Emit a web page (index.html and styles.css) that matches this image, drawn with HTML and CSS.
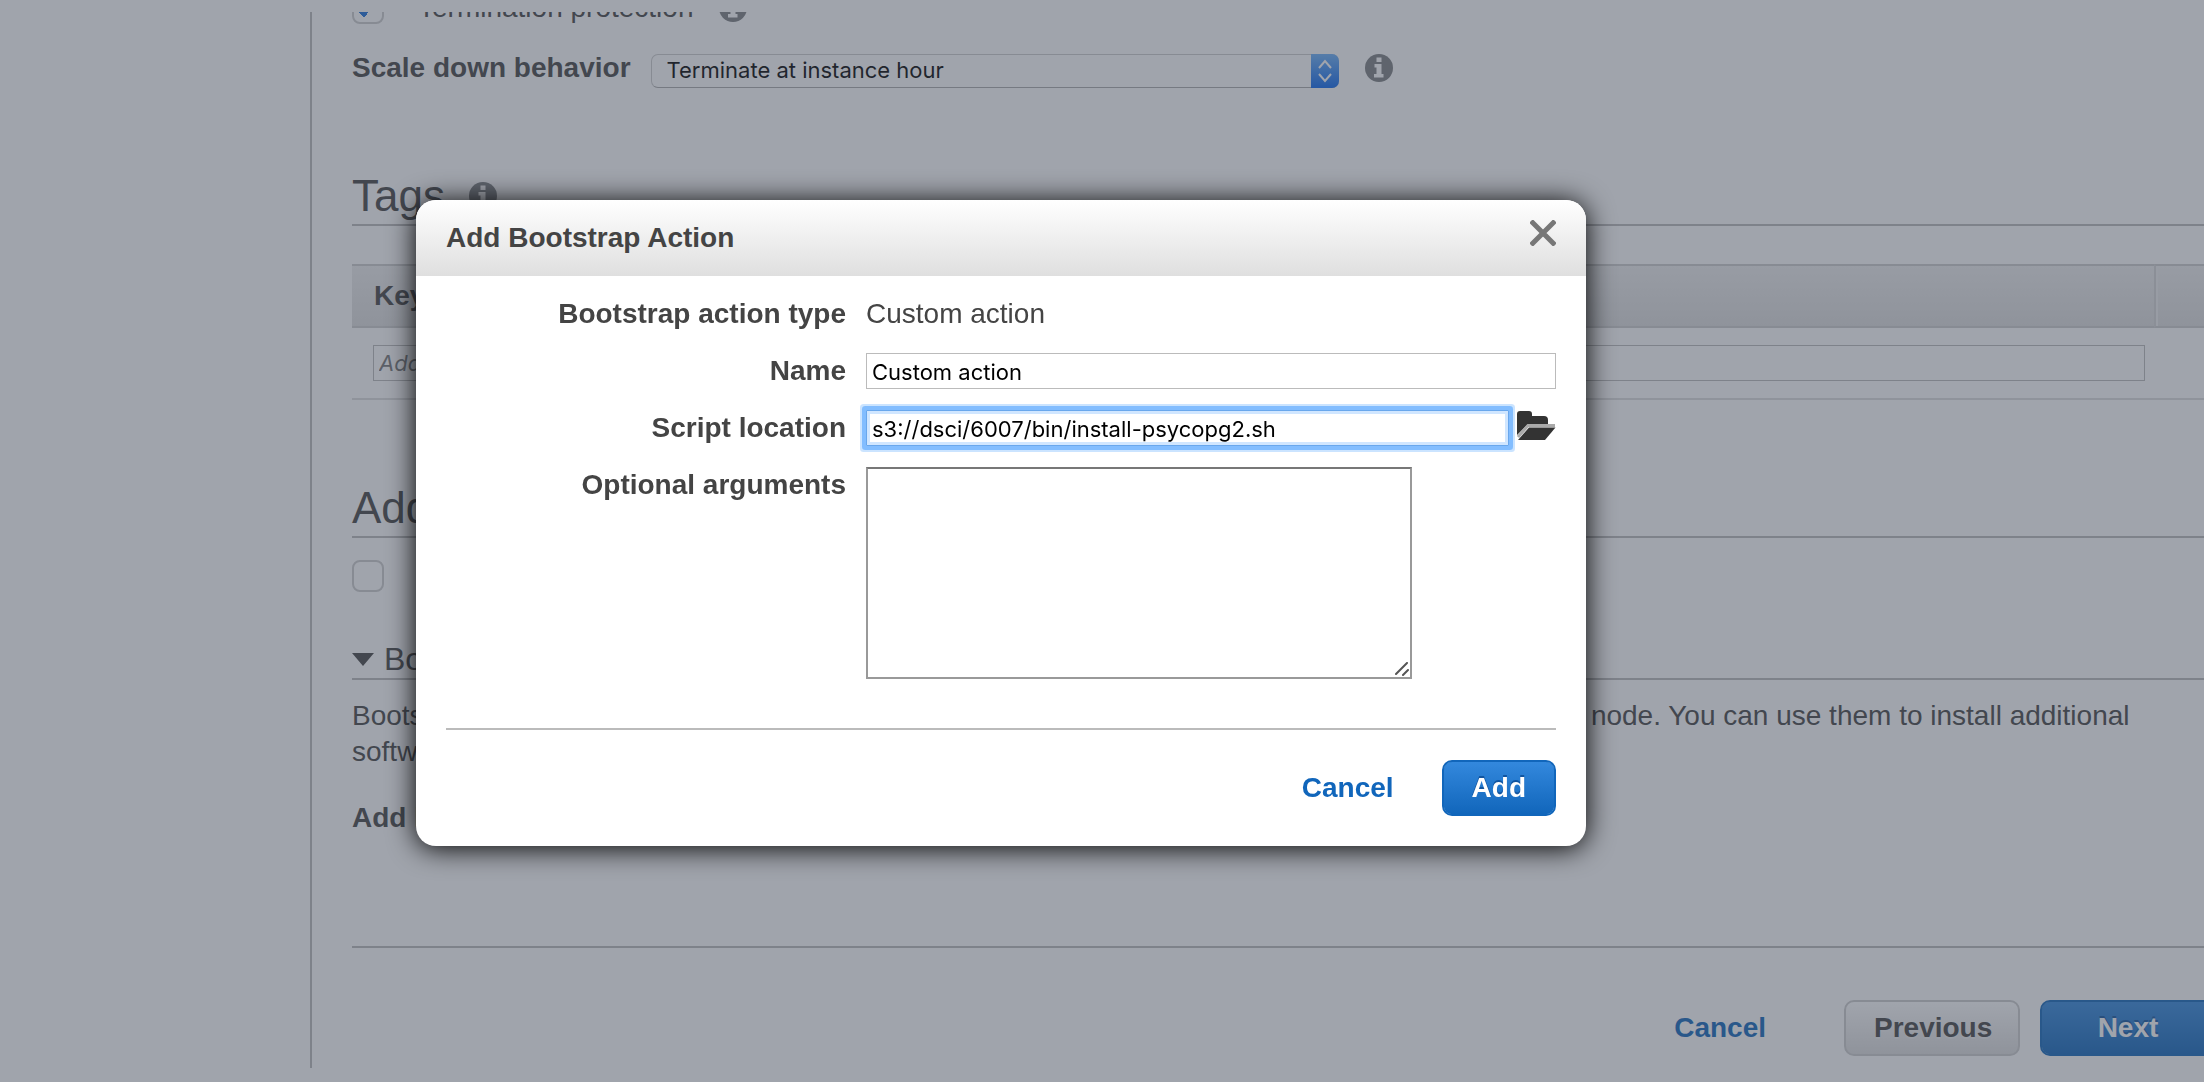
FILE: index.html
```html
<!DOCTYPE html>
<html lang="en">
<head>
<meta charset="utf-8">
<title>Create Cluster - Add Bootstrap Action</title>
<link rel="stylesheet" href="styles.css">
</head>
<body>
<svg class="sprite" aria-hidden="true">
  <symbol id="info" viewBox="0 0 28 28">
    <circle cx="14" cy="14" r="14" fill="#7c7e80"/>
    <path d="M11.500 3.500h5v4.500h-5zM9.500 10h7v10h2v3.500h-9.500V20h2.500v-6.500h-2z" fill="#fff"/>
  </symbol>
</svg>

<main class="page">
  <div class="option">
    <input class="check" type="checkbox" id="termination" checked>
    <label class="option-label" for="termination">Termination protection</label>
    <svg class="info"><use href="#info"/></svg>
  </div>

  <div class="scale">
    <label class="strong" for="scale-down">Scale down behavior</label>
    <div class="select-box">
      <select class="select" id="scale-down">
        <option>Terminate at instance hour</option>
      </select>
      <svg class="select-arrows" viewBox="0 0 28 34" aria-hidden="true">
        <path d="M8 14l6-7 6 7M8 20l6 7 6-7" fill="none" stroke="#fff" stroke-width="2"/>
      </svg>
    </div>
    <svg class="info"><use href="#info"/></svg>
  </div>

  <section>
    <h2 class="section-title">Tags <svg class="info"><use href="#info"/></svg></h2>
    <table class="tags">
      <thead>
        <tr><th>Key</th><th class="tags-end"></th></tr>
      </thead>
      <tbody>
        <tr><td><input class="tag-input" type="text" aria-label="Key" placeholder="Add a key to create a tag"></td><td></td></tr>
      </tbody>
    </table>
  </section>

  <section>
    <h2 class="section-title">Additional Options</h2>
    <div class="option option-spaced">
      <input class="check" type="checkbox" id="emrfs">
      <label class="option-label" for="emrfs">EMRFS consistent view</label>
    </div>
    <h3 class="sub-title">
      <svg class="caret" viewBox="0 0 22 13" aria-hidden="true"><path d="M0 0h22L11 13z" fill="#444"/></svg>
      Bootstrap Actions
    </h3>
    <p class="text">Bootstrap actions are scripts which are executed during setup before Hadoop starts on each cluster node. You can use them to install additional software and customize your applications.</p>
    <p class="add-line">Add bootstrap action</p>
  </section>

  <footer class="footer">
    <a class="link" href="#">Cancel</a>
    <button class="button button-wide" type="button">Previous</button>
    <button class="button button-wide button-primary" type="button">Next</button>
  </footer>
</main>

<div class="overlay"></div>

<form class="dialog" role="dialog" aria-labelledby="dialog-title">
  <header class="dialog-head">
    <h1 class="dialog-title" id="dialog-title">Add Bootstrap Action</h1>
    <button class="close" type="button" aria-label="Close">
      <svg width="26" height="26" viewBox="0 0 26 26"><path d="M1 1l24 24M25 1L1 25" stroke="#777" stroke-width="5"/></svg>
    </button>
  </header>
  <div class="dialog-body">
    <div class="fields">
      <span class="field-label">Bootstrap action type</span>
      <span class="field-value">Custom action</span>
      <label class="field-label" for="name">Name</label>
      <input class="input" type="text" id="name" value="Custom action">
      <label class="field-label" for="script">Script location</label>
      <div class="picker">
        <input class="input input-active" type="text" id="script" value="s3://dsci/6007/bin/install-psycopg2.sh">
        <button class="folder" type="button" aria-label="Browse">
          <svg width="40" height="30" viewBox="0 0 40 30">
            <path d="M1 25V4q0-3 3-3h9q3 0 3 3v2h12q4 0 4 4v5H13q-2 0-3 1z" fill="#333"/>
            <path d="M2 27L12 15.500h27" fill="none" stroke="#aaa" stroke-width="3"/>
            <path d="M13 17.500h26.500L29 30H2z" fill="#333"/>
          </svg>
        </button>
      </div>
      <label class="field-label" for="args">Optional arguments</label>
      <div class="area-box">
        <textarea class="area" id="args"></textarea>
        <svg class="grip" width="14" height="14" viewBox="0 0 14 14" aria-hidden="true"><path d="M1 12L12 1M8 13l5-5" stroke="#555" stroke-width="2" stroke-linecap="round"/></svg>
      </div>
    </div>
    <footer class="dialog-foot">
      <a class="link" href="#">Cancel</a>
      <button class="button button-primary" type="submit">Add</button>
    </footer>
  </div>
</form>
</body>
</html>
```

FILE: styles.css
```css
* {
  box-sizing: border-box;
}

body {
  margin: 0;
  overflow: hidden;
  background: #fff;
  color: #444;
  font: 28px/32px "Liberation Sans", Arial, sans-serif;
}

h1, h2, h3, p {
  margin: 0;
  font-weight: normal;
}

button, input, select, textarea {
  margin: 0;
  font: inherit;
  color: inherit;
}

.sprite {
  position: absolute;
  width: 0;
  height: 0;
}

/* Cluster wizard page */

.page {
  margin: 12px -12px 0 310px;
  padding-left: 40px;
  border-left: 2px solid #bbb;
  overflow: hidden;
}

.option {
  display: flex;
  height: 32px;
  margin-top: -20px;
}

.option-spaced {
  margin-top: 22px;
}

.check {
  appearance: none;
  width: 32px;
  height: 32px;
  border: 2px solid #ccc;
  border-radius: 8px;
  background: #fff;
}

.check:checked {
  background: conic-gradient(from 315deg at 50% 100%, #1a6ed8 90deg, transparent 0) 4px 9px / 12px 14px no-repeat, #fff;
}

.option-label {
  margin: 0 26px 0 34px;
}

.info {
  flex: none;
  width: 28px;
  height: 28px;
  align-self: center;
}

.scale {
  display: flex;
  height: 36px;
  margin-top: 28px;
}

.scale .info {
  margin: 0 0 4px 26px;
}

.strong {
  font-weight: bold;
}

.select-box {
  position: relative;
  align-self: flex-end;
  width: 688px;
  height: 34px;
  margin-left: 20px;
}

.select {
  appearance: none;
  display: block;
  width: 100%;
  height: 34px;
  padding: 0 40px 2px 15px;
  border: 1px solid #ccc;
  border-bottom-color: #aaa;
  border-radius: 7px;
  background: #fff;
  color: #000;
  font: 22px/30px Inter, sans-serif;
}

.select-arrows {
  position: absolute;
  top: 0;
  right: 0;
  width: 28px;
  height: 34px;
  border-radius: 0 7px 7px 0;
  background: linear-gradient(#6bb0f8, #0a66ee);
  pointer-events: none;
}

.section-title {
  display: flex;
  align-items: center;
  gap: 24px;
  margin-top: 84px;
  padding-bottom: 4px;
  border-bottom: 2px solid #bbb;
  font-size: 44px;
  line-height: 48px;
}

.tags {
  width: 100%;
  margin-top: 38px;
  border-collapse: separate;
  border-spacing: 0;
}

.tags th {
  height: 64px;
  padding: 0 22px;
  border: solid #ccc;
  border-width: 2px 0;
  background: linear-gradient(#eee, #ddd);
  text-align: left;
}

.tags .tags-end {
  width: 62px;
  padding: 0;
  border-left: 2px solid #d4d4d4;
  box-shadow: inset 2px 0 #eee;
}

.tags td {
  padding: 17px 9px 17px 21px;
  border-bottom: 2px solid #ddd;
}

.tag-input {
  display: block;
  width: 100%;
  height: 36px;
  padding: 0 5px;
  border: 1px solid #bbb;
  font: italic 22px/32px Inter, sans-serif;
}

.tag-input::placeholder {
  color: #777;
}

.sub-title {
  display: flex;
  align-items: center;
  gap: 10px;
  margin-top: 48px;
  border-bottom: 2px solid #bbb;
  font-size: 32px;
  line-height: 38px;
}

.caret {
  width: 22px;
  height: 13px;
}

.text {
  margin-top: 18px;
  line-height: 36px;
}

.add-line {
  margin-top: 32px;
  font-weight: bold;
}

.footer {
  display: flex;
  align-items: center;
  justify-content: flex-end;
  gap: 20px;
  margin-top: 112px;
  padding: 52px 0 12px;
  border-top: 2px solid #bbb;
}

.footer .link {
  margin-right: 58px;
}

.link {
  color: #1166bb;
  font-weight: bold;
  text-decoration: none;
}

.button {
  height: 56px;
  padding: 0 28px;
  border: 2px solid #ccc;
  border-radius: 10px;
  background: linear-gradient(#fff, #ddd);
  font-weight: bold;
  text-shadow: 0 2px #eee;
}

.button-wide {
  width: 176px;
}

.button-primary {
  border-color: #1166bb;
  background: linear-gradient(#3388dd, #1166bb) padding-box;
  background-color: #1166bb;
  color: #fff;
  text-shadow: 0 -2px #1155a0;
}

/* Dimmed backdrop and dialog */

.overlay {
  position: fixed;
  inset: 0;
  background: rgba(66, 74, 90, .5);
}

.dialog {
  position: absolute;
  top: 200px;
  left: 416px;
  width: 1170px;
  border-radius: 20px;
  background: #fff;
  box-shadow: 0 2px 28px #000;
  overflow: hidden;
}

.dialog-head {
  display: flex;
  align-items: flex-start;
  justify-content: space-between;
  padding: 20px 30px;
  background: linear-gradient(#fff, #dfdfdf);
}

.dialog-title {
  font-size: 28px;
  line-height: 36px;
  font-weight: bold;
}

.close, .folder {
  display: flex;
  padding: 0;
  border: 0;
  background: none;
}

.dialog-body {
  padding: 20px 30px 30px;
}

.fields {
  display: grid;
  grid-template-columns: 400px 1fr;
  gap: 21px 20px;
  line-height: 36px;
}

.field-label {
  justify-self: end;
  min-height: 36px;
  font-weight: bold;
}

.input {
  width: 100%;
  height: 36px;
  padding: 2px 5px 0;
  border: 1px solid #bbb;
  color: #000;
  font: 22px/32px Inter, sans-serif;
}

.input-active {
  border-color: #69a7ec;
  border-radius: 1px;
  outline: 0;
  box-shadow: 0 0 0 4px #82bdff, 0 0 0 6px #cbe4ff, inset 0 0 0 3px #d0e6ff;
}

.picker {
  display: flex;
  gap: 7px;
}

.area-box {
  position: relative;
  width: 546px;
}

.area {
  display: block;
  width: 100%;
  height: 212px;
  border: 2px solid #999;
  border-top-color: #777;
  resize: none;
}

.grip {
  position: absolute;
  right: 3px;
  bottom: 3px;
}

.dialog-foot {
  display: flex;
  align-items: center;
  justify-content: flex-end;
  gap: 48px;
  margin-top: 49px;
  padding-top: 30px;
  border-top: 2px solid #bbb;
}
```
